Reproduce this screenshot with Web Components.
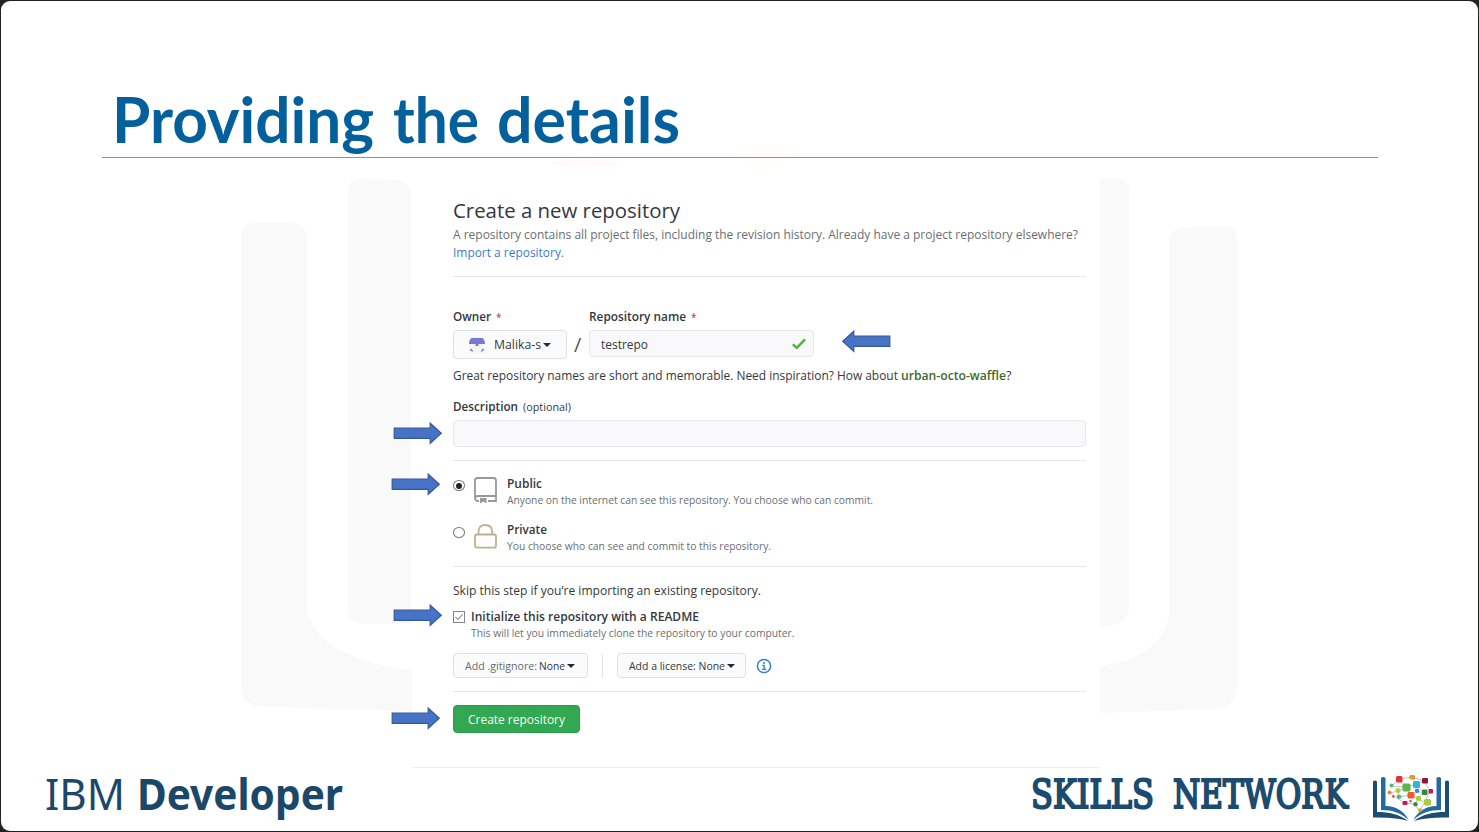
<!DOCTYPE html>
<html lang="en">
<head>
<meta charset="utf-8">
<title>Providing the details</title>
<style>
html,body{margin:0;height:100%;background:#222;overflow:hidden}
body{font-family:"Open Sans","Noto Sans",sans-serif;color:#34383d}
</style>
</head>
<body>
<slide-page></slide-page>
<script>
const define = (name, html, Base = HTMLElement) => {
  const t = document.createElement('template');
  t.innerHTML = html;
  customElements.define(name, class extends Base {
    constructor() {
      super();
      this.attachShadow({mode: 'open'}).append(t.content.cloneNode(true));
    }
  });
};

/* One line of text, condensed or widened to the width given in "w". */
class FitText extends HTMLElement {
  constructor() {
    super();
    this.attachShadow({mode: 'open'}).innerHTML = `<style>
      :host{display:inline-block;white-space:nowrap;flex:none}
      span{display:inline-block;transform-origin:0 50%;white-space:pre}
    </style><span><slot></slot></span>`;
  }
  connectedCallback() { this.fit(); }
  fit() {
    const s = this.shadowRoot.querySelector('span');
    const w = +this.getAttribute('w');
    s.style.transform = 'none';
    this.style.width = 'auto';
    const n = s.offsetWidth ? s.getBoundingClientRect().width : 0;
    if (!n) return;
    this.style.width = w + 'px';
    s.style.transform = `scaleX(${w / n})`;
  }
}
customElements.define('fit-text', FitText);

define('block-arrow', `<style>
  :host{display:block;position:absolute;width:50px;height:25px}
  :host([left]) svg{transform:scaleX(-1)}
  svg{display:block}
</style>
<svg width="50" height="25" viewBox="0 0 50 25"><path d="M1.2 7.2H37.2V2.2L48.3 12.2L37.2 22.3V17.3H1.2Z" fill="#4673c6" stroke="#36589c" stroke-width="1.2"/></svg>`);

define('book-watermark', `<style>:host{display:block;position:absolute;inset:0;pointer-events:none}svg{display:block}</style>
<svg width="1479" height="832" viewBox="0 0 1479 832" fill="#f9f9f9">
  <path d="M241 234Q242 225 252 223H292Q306 225 307 238V609C312 640 345 661 412 671V711L300 708L256 706Q241 702 241 686Z"/>
  <path d="M348 188Q350 179 360 179L395 180Q411 182 411 194V624H362Q348 622 348 608Z"/>
  <path d="M1100 179H1116Q1129 180 1129 190V610Q1127 625 1100 627Z"/>
  <path d="M1100 666C1147 661 1169 636 1169 611V238Q1172 228 1184 228L1210 226H1226Q1237 227 1237 240V686C1236 702 1230 707 1213 709L1100 713Z"/>
  <ellipse cx="585" cy="163" rx="33" ry="5" fill="#fffbfb"/>
  <ellipse cx="764" cy="154" rx="35" ry="10" fill="#fffefb"/>
</svg>`);

define('rule-line', `<style>:host{display:block;height:1px;background:#e6e7e9}</style>`);

define('field-label', `<style>
  :host{display:flex;align-items:center;height:18px;line-height:18px;font-size:12px;font-weight:600;gap:5px}
  i{font-style:normal;color:#cb4a55;font-size:10px;display:none;font-weight:600}
  :host([required]) i{display:block}
</style><slot></slot><i>*</i>`);

define('text-field', `<style>
  :host{display:flex;box-sizing:border-box;align-items:center;justify-content:space-between;height:27px;padding:1px 6px 0 11px;border:1px solid #e6e8eb;border-radius:4px;background:#f9f9fb;font-size:12px}
  svg{display:none}
  :host([valid]) svg{display:block}
</style><slot></slot>
<svg width="16" height="14" viewBox="0 0 16 14"><path d="M1.8 7.3L5.8 10.8L14 2.3" fill="none" stroke="#4fb23c" stroke-width="2.4"/></svg>`);

define('drop-button', `<style>
  :host{display:flex;box-sizing:border-box;align-items:center;border:1px solid #dfe1e5;border-radius:4px;background:#fafbfc;height:25px;padding-left:11px;font-size:10.5px;gap:2px}
  b{width:0;height:0;border:solid transparent;border-width:4px 4px 0;border-top-color:#24292e}
</style><slot></slot><b></b>`);

define('owner-avatar', `<style>:host{display:block;margin-right:6px}svg{display:block}</style>
<svg width="18" height="16" viewBox="0 0 18 16"><rect x="1" width="16" height="16" fill="#f4f4f5"/>
<path d="M3.5 1H14.5Q17 3 17 6V7H10.5V9H7.5V7H1V6Q1 3 3.5 1Z" fill="#777bd0"/><path d="M1.5 12H4L5 14.8H4Z M16.5 12H14L13 14.8H14Z" fill="#777bd0"/></svg>`);

define('visibility-option', `<style>
  :host{display:grid;grid-template-columns:21px 33px 1fr;height:46.5px}
  .radio{width:10px;height:9px;border:1px solid #777;border-radius:50%;margin-top:10px;background:#fff;display:grid;place-items:center}
  :host([checked]) .radio::after{content:"";width:6px;height:6px;border-radius:50%;background:#222}
  .title{display:block;height:16px;line-height:16px;font-size:12px;font-weight:600}
  .note{display:block;height:17px;line-height:17px;font-size:10.5px;color:#6a6e73}
  .text{padding-top:5.5px}
</style>
<div class="radio"></div><slot name="icon"></slot>
<div class="text"><span class="title"><slot name="title"></slot></span><span class="note"><slot name="note"></slot></span></div>`);

define('repo-icon', `<style>:host{display:block;padding-top:6.5px}svg{display:block}</style>
<svg width="23" height="27" viewBox="0 0 23 27" fill="none" stroke="#97999d" stroke-width="1.8"><path d="M5 24H3.8Q1 24 1 21V3.5Q1 1 3.5 1H19.5Q22 1 22 3.5V24H14M1 21.5Q1 19 4 19H22"/><path d="M6 21H12.5V26.5L9.3 24.5L6 26.5Z" fill="#97999d" stroke="none"/></svg>`);

define('lock-icon', `<style>:host{display:block;padding-top:7px}svg{display:block}</style>
<svg width="23" height="25" viewBox="0 0 23 25" fill="none" stroke="#beb18f" stroke-width="1.8"><rect x="1" y="10.5" width="21" height="13.2" rx="2"/><path d="M4.5 10.5V8Q4.5 1 11.3 1T18.2 8V10.5"/></svg>`);

define('info-icon', `<style>:host{display:block}svg{display:block}</style>
<svg width="16" height="16" viewBox="0 0 16 16" fill="none" stroke="#3480d2"><circle cx="8" cy="8" r="6.6" stroke-width="1.5"/><path d="M6.3 7.5H8.2V11.3M6 11.3H10.3" stroke-width="1.3"/><circle cx="8" cy="4.9" r="1" fill="#3480d2" stroke="none"/></svg>`);

define('check-box', `<style>:host{display:block;width:12px;height:12px}svg{display:block}</style>
<svg width="12" height="12" viewBox="0 0 12 12" fill="none"><rect x=".5" y=".5" width="11" height="11" fill="#fff" stroke="#858585"/><path d="M2.5 6L5 8.5L9.7 3.3" stroke="#666"/></svg>`);

define('repo-form', `<style>
  :host{display:block;box-sizing:border-box;width:688px;height:597px;background:#fff;padding:25px 14px 0 41px;border-bottom:1px solid #ededee}
  h2{margin:0;font-weight:400;font-size:20.5px;height:28px;line-height:28px}
  .lead{box-sizing:border-box;font-size:12px;line-height:18px;height:52px;padding-top:2px;color:#6a6e73}
  .lead fit-text{display:block}
  .link{color:#3c7bd4}
  .names{display:grid;grid-template-columns:114px 22px 225px;height:88px;padding-top:31px;box-sizing:border-box;grid-template-rows:22px 28px}
  .slash{font-size:20px;line-height:29px;color:#555;padding-left:7px}
  .names drop-button{height:29px;font-size:12px;padding-left:14px}
  .hint{box-sizing:border-box;padding-top:2px;display:flex;font-size:12px;line-height:18px;height:33px}
  .hint b{color:#3c6a2c;font-weight:600}
  .small{font-size:10px;font-weight:400}
  .options{height:105px}
  .skip{font-size:12px;line-height:18px;height:26px;padding-top:15px}
  .init{display:grid;grid-template-columns:18px 1fr;align-items:center;height:18px;line-height:18px;font-size:12px;font-weight:600}
  .sub{font-size:10.5px;line-height:15px;height:27px;padding-left:18px;color:#6a6e73}
  .adds{display:flex;align-items:center;height:25px;margin-bottom:13px}
  .adds i{width:1px;height:24px;background:#e4e5e8;margin:0 14px}
  .grey{color:#676b70}
  .create{display:flex;align-items:center;width:127px;height:28px;box-sizing:border-box;margin-top:13px;padding-left:14px;border:1px solid #2b9a49;border-radius:4px;background:#32a852;color:#f2faf4;font-size:12.3px}
</style>
<h2><fit-text w="227">Create a new repository</fit-text></h2>
<div class="lead"><fit-text w="625">A repository contains all project files, including the revision history. Already have a project repository elsewhere?</fit-text>
<fit-text class="link" w="111">Import a repository.</fit-text></div>
<rule-line></rule-line>
<div class="names">
  <field-label required><fit-text w="38">Owner</fit-text></field-label><span></span>
  <field-label required><fit-text w="97">Repository name</fit-text></field-label>
  <drop-button><owner-avatar></owner-avatar><fit-text w="47">Malika-s</fit-text></drop-button><span class="slash">/</span>
  <text-field valid><fit-text w="47">testrepo</fit-text></text-field>
</div>
<div class="hint"><fit-text w="448">Great repository names are short and memorable. Need inspiration? How about </fit-text><b><fit-text w="105">urban-octo-waffle</fit-text></b><fit-text w="5.5">?</fit-text></div>
<field-label><fit-text w="65">Description</fit-text><fit-text class="small" w="48">(optional)</fit-text></field-label>
<text-field style="margin:4px 0 13px;height:27px"></text-field>
<rule-line></rule-line>
<div class="options" style="padding-top:9px;box-sizing:border-box">
  <visibility-option checked><repo-icon slot="icon"></repo-icon><fit-text slot="title" w="35">Public</fit-text><fit-text slot="note" w="366">Anyone on the internet can see this repository. You choose who can commit.</fit-text></visibility-option>
  <visibility-option><lock-icon slot="icon"></lock-icon><fit-text slot="title" w="40">Private</fit-text><fit-text slot="note" w="264">You choose who can see and commit to this repository.</fit-text></visibility-option>
</div>
<rule-line></rule-line>
<div class="skip"><fit-text w="308">Skip this step if you’re importing an existing repository.</fit-text></div>
<div class="init"><check-box></check-box><fit-text w="228">Initialize this repository with a README</fit-text></div>
<div class="sub"><fit-text w="323.5">This will let you immediately clone the repository to your computer.</fit-text></div>
<div class="adds">
  <drop-button style="width:134.5px"><fit-text w="72" class="grey">Add .gitignore:</fit-text><fit-text w="26" style="margin-left:-.5px">None</fit-text></drop-button><i></i>
  <drop-button style="width:129.5px"><fit-text w="96">Add a license: None</fit-text></drop-button>
  <info-icon style="margin-left:10px"></info-icon>
</div>
<rule-line></rule-line>
<div class="create"><fit-text w="97">Create repository</fit-text></div>`);

define('ibm-wordmark', `<style>
  :host{display:flex;font-family:"Noto Sans",sans-serif;font-size:43.5px;line-height:58px;color:#1b4768}
  b{font-weight:700;margin-left:12px}
</style><fit-text w="80">IBM</fit-text><b><fit-text w="206">Developer</fit-text></b>`);

define('skills-wordmark', `<style>
  :host{display:flex;font-family:"DejaVu Serif",serif;font-weight:400;-webkit-text-stroke:2.2px currentColor;font-size:39px;line-height:60px;color:#1c4b70;gap:19px}
</style><fit-text w="123">SKILLS</fit-text><fit-text w="175">NETWORK</fit-text>`);

define('network-logo', `<style>:host{display:block}svg{display:block}</style>
<svg width="78" height="50" viewBox="0 0 78 50">
  <g fill="#1d4d70"><path d="M1 7.5Q2.8 5.5 5 7.5V38C17 38 27 40 36 47Q25 43 1 43.5Z"/><path d="M77 7.5Q75 5.5 73 7.5V38C61 38 51 40 42 47Q54 43 77 43.5Z"/></g>
  <g fill="#2469a2"><path d="M9 4Q11 2 13.5 4V32C24 32 33 38 36.5 46C29 39 21 36 9 36Z"/><path d="M69 4Q67 2 64.5 4V32C54 32 45 38 41.5 46C49 39 57 36 69 36Z"/></g>
  <path d="M20 12L27 5L40 3L52 7L58 17L53 28L47 37L43 30L32 29L18 19L26 17L34 13L44 10L51 18L45 18L38 21L27 23M40 3L44 10L52 7M34 13L38 21L46 25L53 28M51 18L46 25L43 30M20 12L34 13L27 5M26 17L27 23" stroke="#a5a5a5" stroke-width=".7" fill="none"/>
  <rect x="24" y="2" width="6.5" height="6.5" rx="1.5" fill="#e33338"/><rect x="37.5" y="1" width="5.5" height="4.5" rx="1.3" fill="#d99c35"/><rect x="30.5" y="9.5" width="8" height="8" rx="1.8" fill="#55b947"/><rect x="41" y="7" width="7" height="7" rx="1.6" fill="#31b4dc"/><rect x="50" y="4" width="6" height="5.5" rx="1.3" fill="#8d1541"/><rect x="35.5" y="18" width="7" height="6.5" rx="1.5" fill="#f25d27"/><rect x="52" y="25" width="7" height="6.5" rx="1.5" fill="#a6ce39"/><rect x="50" y="15.5" width="5.5" height="5.5" rx="1.3" fill="#2e8b3d"/><rect x="56.5" y="15" width="4.5" height="4.5" rx="1" fill="#c9135d"/><rect x="30.5" y="27" width="5" height="4" rx="1" fill="#c9135d"/>
  <circle cx="19.5" cy="11.5" r="2" fill="#55b684"/><circle cx="17.5" cy="18.5" r="2" fill="#f08624"/><circle cx="26" cy="16.5" r="2.5" fill="#b0cb46"/><circle cx="27" cy="22.8" r="2.3" fill="#55b684"/><circle cx="21.3" cy="22.5" r="1.2" fill="#de3339"/><circle cx="45" cy="16.8" r="2.2" fill="#3688c6"/><circle cx="46.5" cy="24.3" r="2.6" fill="#a6ce39"/><circle cx="43.5" cy="30.3" r="2.2" fill="#328e45"/><circle cx="38.5" cy="27.2" r="1.1" fill="#b33"/><circle cx="48" cy="36.3" r="2" fill="#dfa13a"/>
</svg>`);

define('slide-page', `<style>
  :host{display:flex;flex-direction:column;position:relative;box-sizing:border-box;width:1477px;height:830px;margin:1px;background:#fff;border-radius:9px;overflow:hidden}
  book-watermark{left:-1px;top:-1px}
  h1{display:flex;position:relative;margin:80px 0 0 101px;width:1276px;height:77px;box-sizing:border-box;border-bottom:1px solid #7690d4;color:#03609c;font:700 64px/75px Lato,sans-serif;padding-left:10px}
  main{position:relative;margin:13px 0 0 411px}
  footer{position:relative;display:flex;align-items:flex-start;height:60px;margin-top:-4px;padding:0 28.5px 0 44px}
  skills-wordmark{margin:1px 0 0 auto}
  network-logo{margin:10px 0 0 23.5px}
</style>
<book-watermark></book-watermark>
<h1><fit-text w="262">Providing</fit-text><fit-text w="86" style="margin-left:19px">the</fit-text><fit-text w="183" style="margin-left:18px">details</fit-text></h1>
<main><repo-form></repo-form></main>
<footer><ibm-wordmark></ibm-wordmark><skills-wordmark></skills-wordmark><network-logo></network-logo></footer>
<block-arrow left style="left:840px;top:327.5px"></block-arrow>
<block-arrow style="left:391.5px;top:419.5px"></block-arrow>
<block-arrow style="left:390px;top:471px"></block-arrow>
<block-arrow style="left:391.5px;top:602px"></block-arrow>
<block-arrow style="left:390px;top:705px"></block-arrow>`);

/* Refit every line once the whole tree is laid out. */
const refit = root => root.querySelectorAll('*').forEach(e => {
  if (e.fit) e.fit();
  if (e.shadowRoot) refit(e.shadowRoot);
});
refit(document);
</script>
</body>
</html>
